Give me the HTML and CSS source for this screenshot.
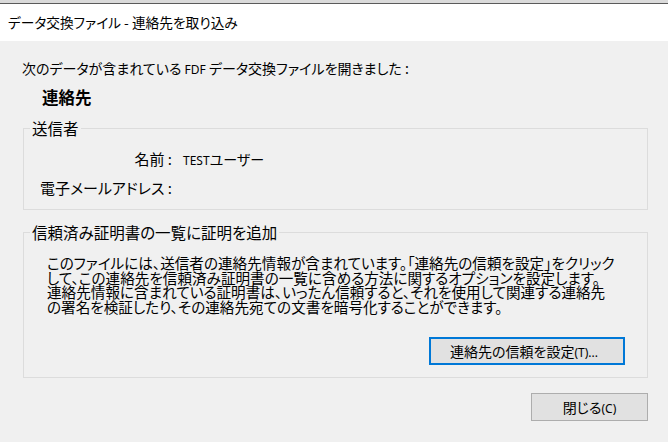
FILE: index.html
```html
<!DOCTYPE html>
<html lang="ja">
<head>
<meta charset="utf-8">
<link rel="stylesheet" href="styles.css">
</head>
<body>
<div class="window">
  <div class="topstrip"></div>
  <div class="titlebar">データ交換ファイル - 連絡先を取り込み</div>
  <div class="content">
    <div class="intro">次のデータが含まれている <span class="latin">FDF</span> データ交換ファイルを開きました :</div>
    <div class="contact">連絡先</div>
    <fieldset class="group sender">
      <legend>送信者</legend>
      <div class="fields">
        <div class="label">名前 :</div><div class="value"><span class="latin">TEST</span>ユーザー</div>
        <div class="label">電子メールアドレス :</div><div class="value"></div>
      </div>
    </fieldset>
    <fieldset class="group trust">
      <legend>信頼済み証明書の一覧に証明を追加</legend>
      <p class="desc">このファイルには、送信者の連絡先情報が含まれています。「連絡先の信頼を設定」をクリック<br>して、この連絡先を信頼済み証明書の一覧に含める方法に関するオプションを設定します。<br>連絡先情報に含まれている証明書は、いったん信頼すると、それを使用して関連する連絡先<br>の署名を検証したり、その連絡先宛ての文書を暗号化することができます。</p>
      <div class="actions">
        <button class="btn focused">連絡先の信頼を設定<span class="acc">(T)...</span></button>
      </div>
    </fieldset>
    <div class="footer">
      <button class="btn close">閉じる<span class="acc">(C)</span></button>
    </div>
  </div>
</div>
</body>
</html>
```
FILE: styles.css
```css
* { box-sizing: border-box; }
html, body {
  margin: 0;
  padding: 0;
}
body {
  width: 668px;
  height: 442px;
  overflow: hidden;
  background: #f0f0f0;
  color: #000;
  font-family: "Noto Sans CJK JP", "Noto Sans", sans-serif;
  font-size: 15px;
  font-feature-settings: "palt";
}
.window {
  width: 668px;
  height: 442px;
}
.topstrip {
  height: 4px;
  background: #dadada;
  border-bottom: 1px solid #5a5a5a;
}
.titlebar {
  height: 37px;
  line-height: 37px;
  background: #fff;
  padding-left: 8px;
  font-size: 13.7px;
  white-space: nowrap;
}
.content {
  padding: 17px 20px 0 23px;
}
.intro {
  height: 20px;
  line-height: 20px;
  margin-left: -1px;
  font-size: 14px;
  white-space: nowrap;
}
.latin {
  font-family: "Noto Sans", sans-serif;
  font-size: 12px;
  line-height: 1;
}
.contact {
  height: 20px;
  line-height: 20px;
  margin-top: 9px;
  margin-left: 19px;
  font-weight: bold;
  font-size: 16.5px;
}
.group {
  margin: 0;
  width: 625px;
  border: 1px solid #dcdcdc;
  min-width: 0;
}
.group legend {
  margin-left: 6px;
  padding: 0 2px;
  height: 16px;
  line-height: 16px;
  font-size: 15.5px;
}
.sender {
  margin-top: 13px;
  padding: 13px 0 11px 0;
}
.fields {
  display: grid;
  grid-template-columns: 148px 1fr;
  grid-auto-rows: 20px;
  row-gap: 9px;
  line-height: 20px;
}
.label {
  text-align: right;
  white-space: nowrap;
}
.value {
  padding-left: 11px;
  font-size: 14px;
}
.trust {
  margin-top: 14px;
  padding: 16px 22px 12px 0;
}
.desc {
  margin: 0;
  padding-left: 23px;
  font-size: 14.6px;
  line-height: 14.5px;
  white-space: nowrap;
}
.actions {
  display: flex;
  justify-content: flex-end;
  margin-top: 23px;
}
.btn {
  font-family: inherit;
  font-size: 14px;
  font-feature-settings: "palt";
  color: #000;
  background: #e1e1e1;
  border: 1px solid #adadad;
  height: 28px;
  padding: 0;
  margin: 0;
  line-height: 24px;
}
.btn .acc {
  font-family: "Noto Sans", sans-serif;
  font-size: 12px;
  line-height: 1;
}
.focused {
  width: 196px;
  padding-right: 6px;
  border: 2px solid #0078d7;
}
.footer {
  display: flex;
  justify-content: flex-end;
  width: 625px;
  margin-top: 15px;
}
.close {
  width: 117px;
}
```
